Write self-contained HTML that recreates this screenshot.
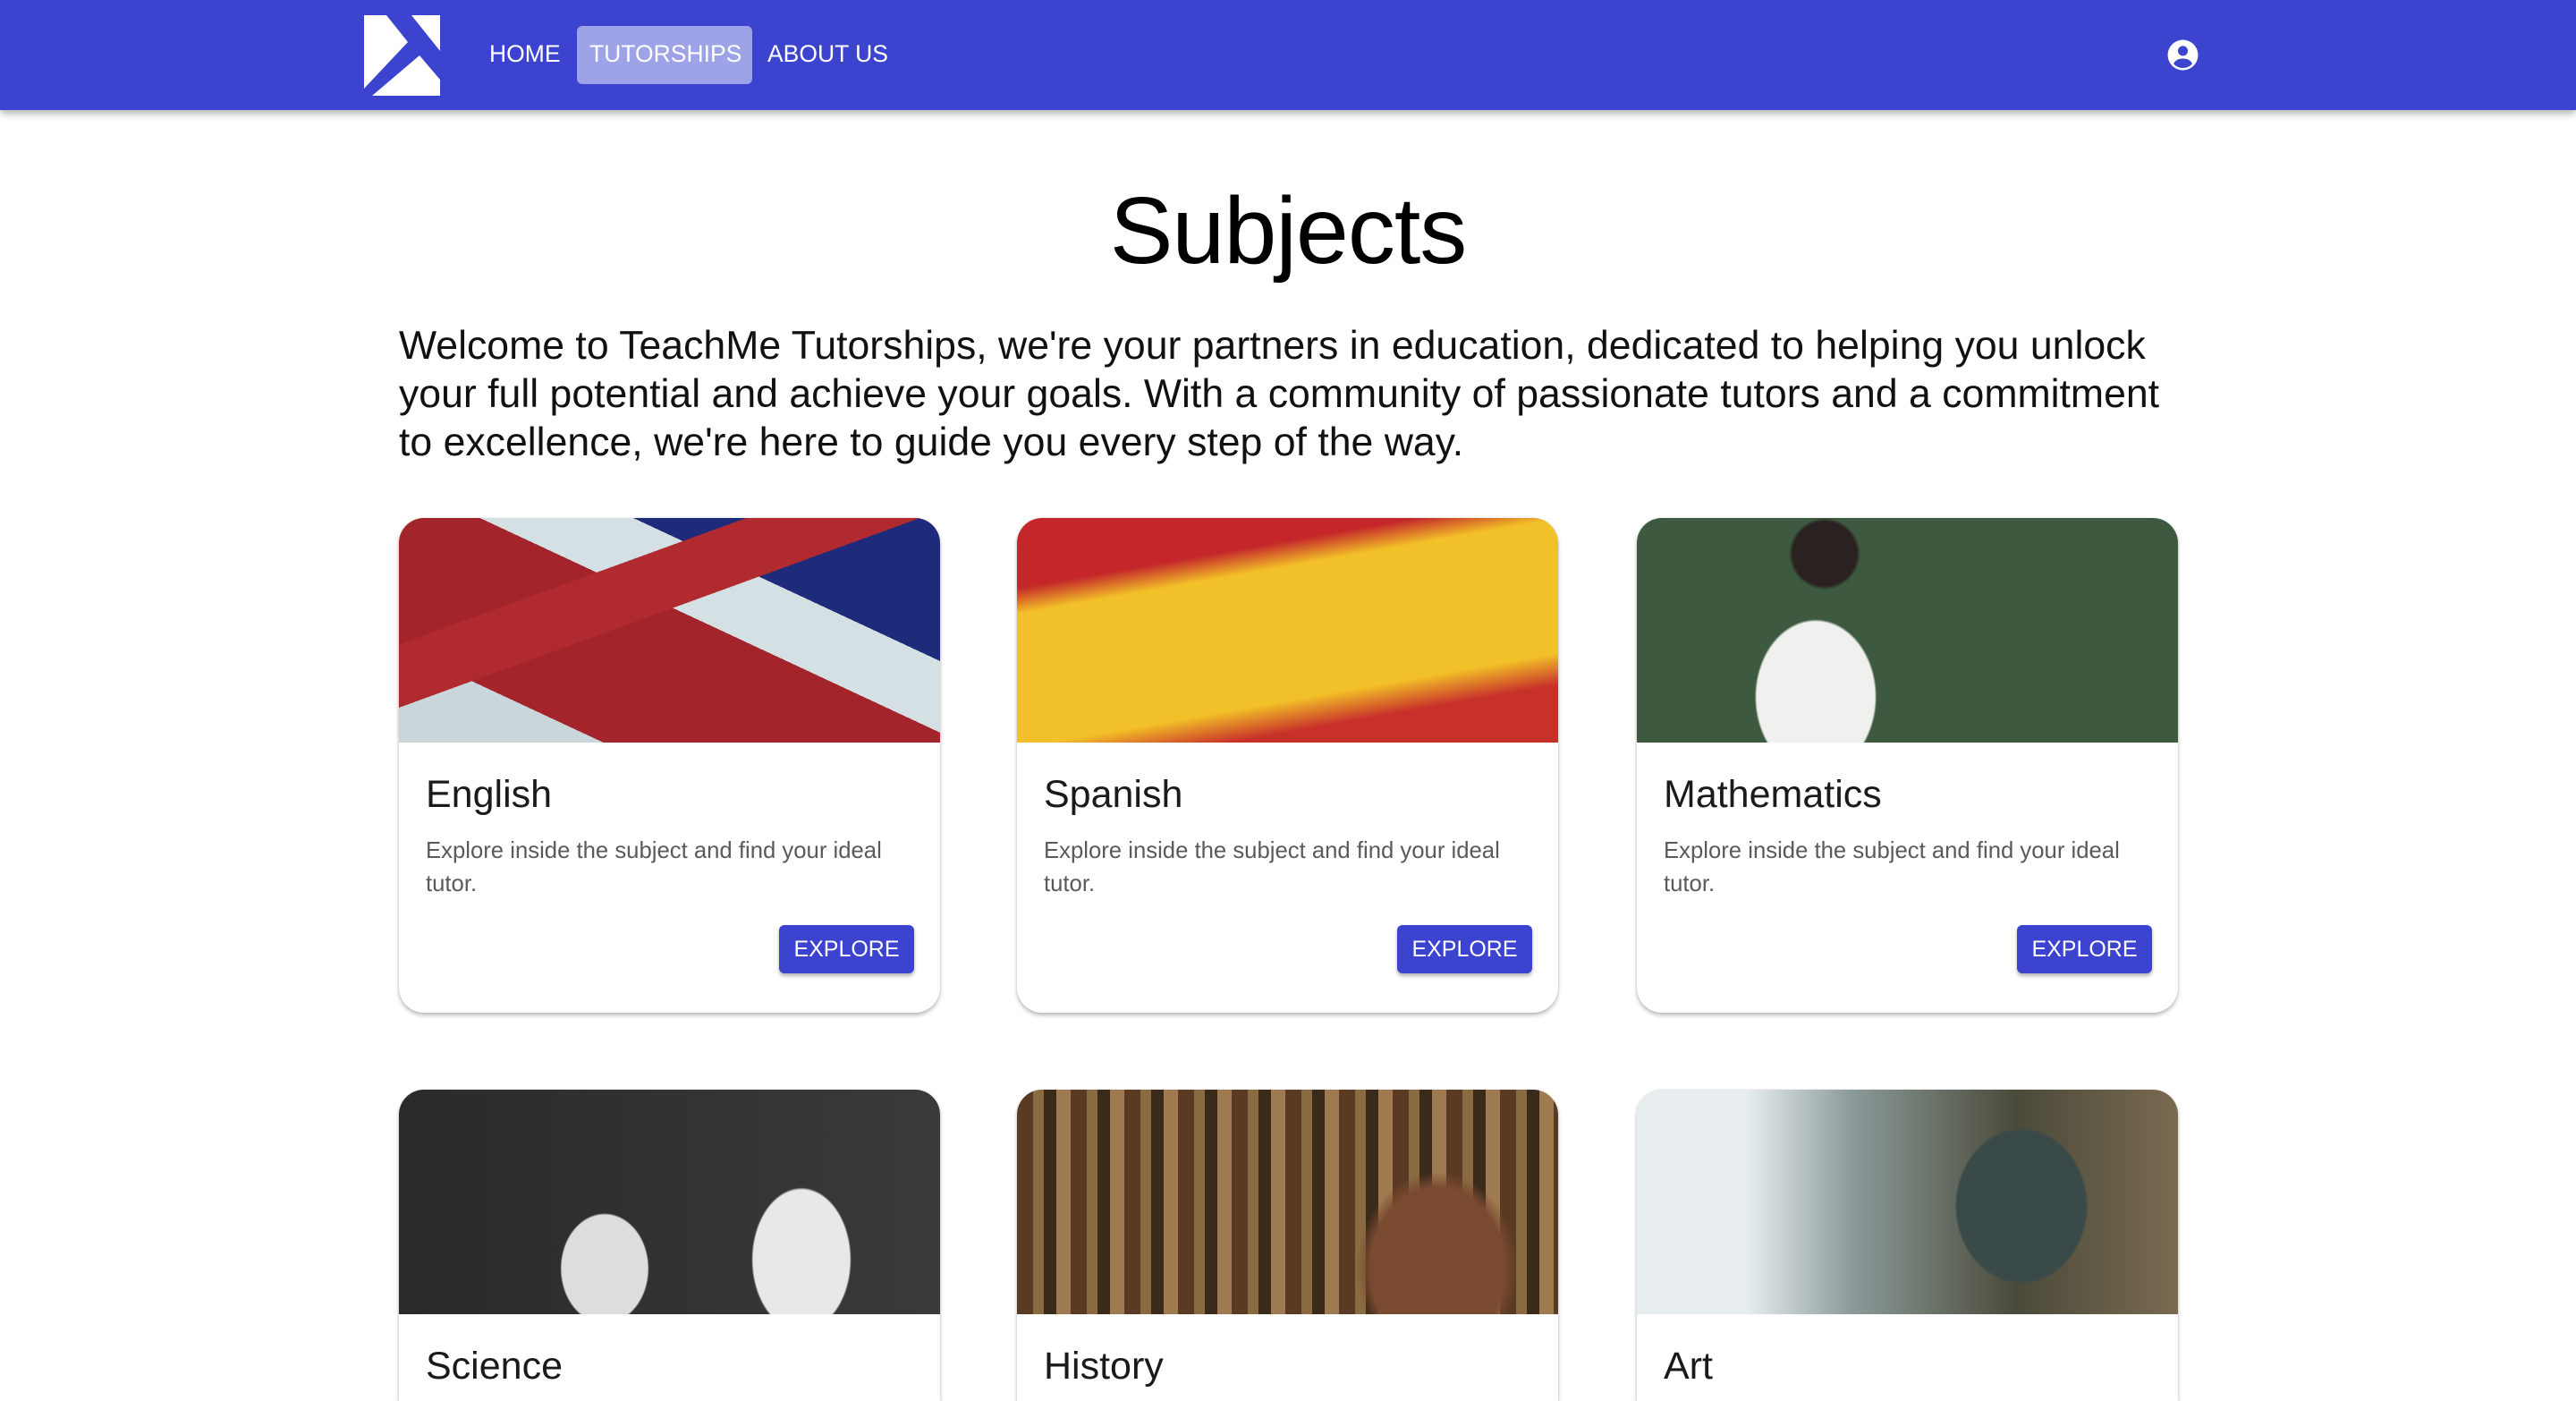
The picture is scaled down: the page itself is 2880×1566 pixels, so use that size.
<!DOCTYPE html>
<html><head><meta charset="utf-8"><style>
*{box-sizing:border-box;margin:0;padding:0}
html,body{width:2880px;height:1566px;overflow:hidden;background:#fff}
body{font-family:"Liberation Sans",Arial,sans-serif}
.wrap{position:relative;width:2880px;height:1566px;overflow:hidden}
.nav{position:absolute;left:0;top:0;width:2880px;height:123px;background:#3c44cf;box-shadow:0 4px 8px rgba(0,0,0,.3);z-index:2}
.nav a{position:absolute;color:#fff;font-size:26.5px;top:45px;text-decoration:none}
.pill{position:absolute;left:645px;top:29px;width:196px;height:65px;background:#9ea2e6;border-radius:6px}
h1{position:absolute;left:0;width:2880px;text-align:center;top:198px;font-size:106px;font-weight:400;color:#000;letter-spacing:-1px}
.intro{position:absolute;left:446px;top:360px;width:2000px;font-size:44.6px;line-height:54px;color:#111}
.card{position:absolute;width:605px;height:553px;border-radius:28px;overflow:hidden;background:#fff;box-shadow:0 3px 5px rgba(0,0,0,.25),0 0 2px rgba(0,0,0,.12)}
.card.s{height:348px;border-radius:28px 28px 0 0}
.img{height:251px}
.card h2{position:absolute;left:30px;top:285px;font-size:43px;font-weight:400;color:#1a1a1a}
.card p{position:absolute;left:30px;top:354px;width:560px;font-size:25.7px;line-height:37px;color:#5a5a5a}
.btn{position:absolute;left:425px;top:455px;width:151px;height:54px;background:#3c44cf;color:#fff;border-radius:6px;font-size:25px;text-align:center;line-height:54px;box-shadow:0 3px 4px rgba(0,0,0,.3)}
</style></head><body><div class="wrap">
<div class="nav">
<svg style="position:absolute;left:404px;top:17px" width="88" height="90" viewBox="0 0 88 90"><path d="M3 0H28L52 30 3 82Z" fill="#fff"/><path d="M56 0H88V40Z" fill="#fff"/><path d="M65 45L88 72V90H12Z" fill="#fff"/></svg>
<a style="left:547px">HOME</a>
<div class="pill"></div>
<a style="left:659px">TUTORSHIPS</a>
<a style="left:858px">ABOUT US</a>
<svg style="position:absolute;left:2422px;top:43px" width="37" height="37" viewBox="0 0 24 24"><circle cx="12" cy="12" r="11" fill="#fff"/><circle cx="12" cy="9" r="3.6" fill="#3c44cf"/><path d="M5.2 18.3C6.5 15.6 9 14.6 12 14.6s5.5 1 6.8 3.7A9 9 0 0 1 5.2 18.3Z" fill="#3c44cf"/></svg>
</div>
<h1>Subjects</h1>
<div class="intro">Welcome to TeachMe Tutorships, we're your partners in education, dedicated to helping you unlock your full potential and achieve your goals. With a community of passionate tutors and a commitment to excellence, we're here to guide you every step of the way.</div>

<div class="card" style="left:446px;top:579px"><div class="img" style="background:linear-gradient(160deg,transparent 0 30%,#b02a30 30% 45%,transparent 45%),linear-gradient(25deg,#c9d6da 0 20%,#a4242b 20% 55%,#d4e0e3 55% 70%,#1e2a7a 70%)"></div><h2>English</h2><p>Explore inside the subject and find your ideal tutor.</p><div class="btn">EXPLORE</div></div>
<div class="card" style="left:1137px;top:579px"><div class="img" style="background:linear-gradient(170deg,#c4262a 0 22%,#f2c028 30% 72%,#c8302a 82%)"></div><h2>Spanish</h2><p>Explore inside the subject and find your ideal tutor.</p><div class="btn">EXPLORE</div></div>
<div class="card" style="left:1830px;top:579px"><div class="img" style="background:radial-gradient(ellipse 110px 140px at 200px 200px,#f0f0ee 60%,transparent 62%),radial-gradient(circle 40px at 210px 40px,#2a2220 90%,transparent),#3d5a40"></div><h2>Mathematics</h2><p>Explore inside the subject and find your ideal tutor.</p><div class="btn">EXPLORE</div></div>

<div class="card s" style="left:446px;top:1218px"><div class="img" style="background:radial-gradient(ellipse 90px 130px at 450px 190px,#e8e8e8 60%,transparent 62%),radial-gradient(ellipse 80px 100px at 230px 200px,#ddd 60%,transparent 62%),linear-gradient(90deg,#2a2a2a,#3a3a3a)"></div><h2>Science</h2></div>
<div class="card s" style="left:1137px;top:1218px"><div class="img" style="background:radial-gradient(ellipse 150px 180px at 470px 200px,#7a4a30 50%,transparent 60%),repeating-linear-gradient(90deg,#5a3a22 0 18px,#8a6a40 18px 30px,#3a2a1a 30px 44px,#a07a50 44px 60px)"></div><h2>History</h2></div>
<div class="card s" style="left:1830px;top:1218px"><div class="img" style="background:radial-gradient(ellipse 120px 140px at 430px 130px,#3a4a48 60%,transparent 62%),linear-gradient(90deg,#e8eef0 0 20%,#8a9a98 40%,#4a4a3a 70%,#7a6a50)"></div><h2>Art</h2></div>
</div></body></html>
